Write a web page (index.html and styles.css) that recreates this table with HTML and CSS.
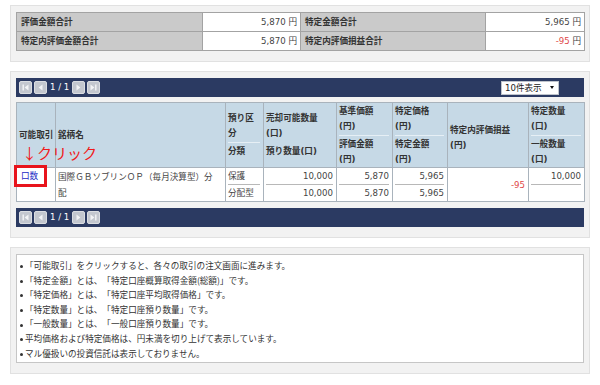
FILE: index.html
```html
<!DOCTYPE html>
<html lang="ja">
<head>
<meta charset="utf-8">
<title>保有資産</title>
<link rel="stylesheet" href="styles.css">
</head>
<body>
<div class="page">
  <section class="panel">
    <table class="summary">
      <colgroup><col class="c-l1"><col class="c-v1"><col class="c-l2"><col class="c-v2"></colgroup>
      <tr><th>評価金額合計</th><td>5,870 円</td><th>特定金額合計</th><td>5,965 円</td></tr>
      <tr><th>特定内評価金額合計</th><td>5,870 円</td><th>特定内評価損益合計</th><td><span class="neg">-95</span> 円</td></tr>
    </table>
  </section>

  <section class="panel">
    <div class="bar">
      <div class="pager">
        <svg class="pbtn" viewBox="0 0 13 13"><rect x="0.5" y="0.5" width="12" height="12" rx="1.5" class="pb-bg"/><rect x="3.5" y="3.5" width="1.4" height="6" class="pb-ic"/><path d="M9.5 3.5v6L5.6 6.5z" class="pb-ic"/></svg>
        <svg class="pbtn" viewBox="0 0 13 13"><rect x="0.5" y="0.5" width="12" height="12" rx="1.5" class="pb-bg"/><path d="M8.5 3.5v6L4.6 6.5z" class="pb-ic"/></svg>
        <span class="pcount">1 / 1</span>
        <svg class="pbtn" viewBox="0 0 13 13"><rect x="0.5" y="0.5" width="12" height="12" rx="1.5" class="pb-bg"/><path d="M4.5 3.5v6L8.4 6.5z" class="pb-ic"/></svg>
        <svg class="pbtn" viewBox="0 0 13 13"><rect x="0.5" y="0.5" width="12" height="12" rx="1.5" class="pb-bg"/><path d="M3.5 3.5v6L7.4 6.5z" class="pb-ic"/><rect x="8.1" y="3.5" width="1.4" height="6" class="pb-ic"/></svg>
      </div>
      <div class="select"><span>10件表示</span><span class="caret"></span></div>
    </div>

    <div class="tablewrap">
      <table class="holdings">
        <colgroup>
          <col class="w1"><col class="w2"><col class="w3"><col class="w4"><col class="w5"><col class="w6"><col class="w7"><col class="w8">
        </colgroup>
        <thead>
          <tr>
            <th class="first">可能取引</th>
            <th>銘柄名</th>
            <th><div class="sub">預り区分</div><div>分類</div></th>
            <th><div class="sub nodiv">売却可能数量(口)</div><div>預り数量(口)</div></th>
            <th><div class="sub">基準価額(円)</div><div>評価金額(円)</div></th>
            <th><div class="sub">特定価格(円)</div><div>特定金額(円)</div></th>
            <th class="pl">特定内評価損益(円)</th>
            <th><div class="sub">特定数量(口)</div><div>一般数量(口)</div></th>
          </tr>
        </thead>
        <tbody>
          <tr>
            <td class="trade"><a href="#" class="link">口数</a></td>
            <td class="name">国際ＧＢソブリンＯＰ（毎月決算型）分配</td>
            <td><div class="sub">保護</div><div>分配型</div></td>
            <td class="num"><div class="sub">10,000</div><div>10,000</div></td>
            <td class="num"><div class="sub">5,870</div><div>5,870</div></td>
            <td class="num"><div class="sub">5,965</div><div>5,965</div></td>
            <td class="num mid neg">-95</td>
            <td class="num"><div class="sub">10,000</div><div class="empty"></div></td>
          </tr>
        </tbody>
      </table>
      <div class="anno">↓クリック</div>
      <div class="redbox"></div>
    </div>

    <div class="bar">
      <div class="pager">
        <svg class="pbtn" viewBox="0 0 13 13"><rect x="0.5" y="0.5" width="12" height="12" rx="1.5" class="pb-bg"/><rect x="3.5" y="3.5" width="1.4" height="6" class="pb-ic"/><path d="M9.5 3.5v6L5.6 6.5z" class="pb-ic"/></svg>
        <svg class="pbtn" viewBox="0 0 13 13"><rect x="0.5" y="0.5" width="12" height="12" rx="1.5" class="pb-bg"/><path d="M8.5 3.5v6L4.6 6.5z" class="pb-ic"/></svg>
        <span class="pcount">1 / 1</span>
        <svg class="pbtn" viewBox="0 0 13 13"><rect x="0.5" y="0.5" width="12" height="12" rx="1.5" class="pb-bg"/><path d="M4.5 3.5v6L8.4 6.5z" class="pb-ic"/></svg>
        <svg class="pbtn" viewBox="0 0 13 13"><rect x="0.5" y="0.5" width="12" height="12" rx="1.5" class="pb-bg"/><path d="M3.5 3.5v6L7.4 6.5z" class="pb-ic"/><rect x="8.1" y="3.5" width="1.4" height="6" class="pb-ic"/></svg>
      </div>
    </div>
  </section>

  <section class="panel">
    <ul class="notes">
      <li>「可能取引」をクリックすると、各々の取引の注文画面に進みます。</li>
      <li>「特定金額」とは、「特定口座概算取得金額(総額)」です。</li>
      <li>「特定価格」とは、「特定口座平均取得価格」です。</li>
      <li>「特定数量」とは、「特定口座預り数量」です。</li>
      <li>「一般数量」とは、「一般口座預り数量」です。</li>
      <li>平均価格および特定価格は、円未満を切り上げて表示しています。</li>
      <li>マル優扱いの投資信託は表示しておりません。</li>
    </ul>
  </section>
</div>
</body>
</html>
```

FILE: styles.css
```css
* { box-sizing: border-box; }

body {
  margin: 0;
  background: #fff;
  font-family: "DejaVu Sans", "Noto Sans CJK JP", sans-serif;
  font-size: 8.6px;
  color: #333;
  text-spacing-trim: space-all;
}

.page {
  padding: 5px 10px;
  display: flex;
  flex-direction: column;
  gap: 9px;
}

.panel {
  background: #f2f2f2;
  border: 1px solid #e1e1e1;
  padding: 6px 5px 10px;
}

/* summary */
.summary {
  width: 100%;
  border-collapse: collapse;
  table-layout: fixed;
}
.c-l1 { width: 186px; }
.c-v1 { width: 98px; }
.c-l2 { width: 185px; }
.c-v2 { width: 99px; }
.summary tr { height: 19px; }
.summary th,
.summary td {
  border: 1px solid #a3a3a3;
  padding: 0 3px 0 4px;
  line-height: 14px;
}
.summary th {
  background: #cacaca;
  text-align: left;
  font-weight: bold;
  color: #333;
}
.summary td {
  background: #fff;
  text-align: right;
  color: #444;
}

.neg { color: #e04848; }

/* bars */
.bar {
  height: 19px;
  background: #2b3a62;
  display: flex;
  align-items: center;
  justify-content: space-between;
  padding: 0 25px 0 3px;
}
.pager {
  display: flex;
  align-items: center;
  gap: 2px;
}
.pbtn {
  width: 13px;
  height: 13px;
  display: block;
}
.pb-bg { fill: #c3c7cf; stroke: #dadde2; stroke-width: 1; }
.pb-ic { fill: #f3f4f6; }
.pcount {
  color: #fff;
  margin: 0 1px;
  line-height: 13px;
}
.select {
  width: 58px;
  height: 14px;
  background: #fff;
  border: 1px solid #bfc4cc;
  display: flex;
  align-items: center;
  justify-content: space-between;
  padding: 0 4px 0 3px;
  color: #222;
  line-height: 12px;
}
.caret {
  width: 0;
  height: 0;
  border-left: 2.5px solid transparent;
  border-right: 2.5px solid transparent;
  border-top: 3px solid #111;
}

/* holdings */
.tablewrap {
  position: relative;
  margin: 5px 0 6px;
}
.holdings {
  width: 100%;
  border-collapse: collapse;
  table-layout: fixed;
}
.w1 { width: 39px; }
.w2 { width: 170px; }
.w3 { width: 38px; }
.w4 { width: 73px; }
.w5 { width: 56px; }
.w6 { width: 55px; }
.w7 { width: 81px; }
.w8 { width: 56px; }

.holdings th,
.holdings td {
  border: 1px solid #a9b3bc;
  padding: 0 3px 0 2px;
}
.holdings thead tr { height: 65px; }
.holdings th {
  background: #c6d9e6;
  font-weight: bold;
  text-align: left;
  vertical-align: middle;
  line-height: 15px;
  color: #333;
}
.holdings th.first {
  padding: 0 0 0 2px;
  white-space: nowrap;
}
.holdings th.pl { padding-top: 6px; }
.holdings th .sub {
  border-bottom: 1px solid #e6eff5;
  padding-bottom: 1px;
  margin-bottom: 1px;
}
.holdings th .sub.nodiv { border-bottom-color: transparent; }

.holdings tbody tr { height: 34px; }
.holdings td {
  background: #fff;
  vertical-align: top;
  line-height: 16px;
  color: #444;
}
.holdings td .sub { border-bottom: 1px solid #b8b8b8; }
.holdings td .empty { height: 16px; }
.holdings td.num { text-align: right; }
.holdings td.mid { vertical-align: middle; }
.holdings td.neg { color: #e04848; }
.holdings td.trade { padding-left: 4px; }
.holdings td.name {
  font-family: "Noto Sans CJK JP", sans-serif;
  padding-right: 6px;
}
.link {
  color: #1a28c4;
  text-decoration: none;
}

.anno {
  position: absolute;
  left: 6px;
  top: 43px;
  font-family: "Noto Sans CJK JP", sans-serif;
  font-size: 15px;
  line-height: 15px;
  color: #f01a1a;
}
.redbox {
  position: absolute;
  left: -2px;
  top: 63px;
  width: 33px;
  height: 22px;
  border: 3px solid #e8141c;
}

/* notes */
.notes {
  list-style: none;
  margin: 0;
  padding: 3px 0 2px 2px;
  background: #fff;
  border: 1px solid #c6c6c6;
  line-height: 14.6px;
  color: #333;
  font-family: "Noto Sans CJK JP", sans-serif;
}
.notes li::before {
  content: "";
  display: inline-block;
  width: 3px;
  height: 3px;
  border-radius: 50%;
  background: #333;
  margin: 0 2px 0 1px;
  vertical-align: middle;
}
```
